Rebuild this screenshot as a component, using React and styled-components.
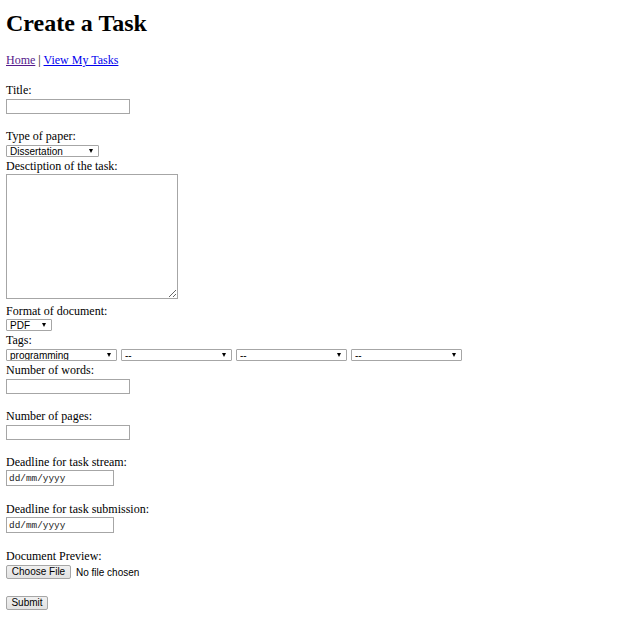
import React from "react";
import styled, { createGlobalStyle } from "styled-components";

const Global = createGlobalStyle`
  html, body { margin: 0; padding: 0; background: #fff; }
  body { font-family: "Liberation Serif", "Times New Roman", serif; color: #000; }
`;

const Page = styled.div`
  padding: 6px;
  font-size: 12px;
  line-height: 14px;
`;

const Title = styled.h1`
  margin: 3px 0 16px;
  font-size: 24px;
  line-height: 28px;
  font-weight: bold;
`;

const Nav = styled.p`
  margin: 0 0 15px;
  line-height: 14px;
`;

const NavLink = styled.a`
  color: ${(p) => (p.$visited ? "#551a8b" : "#0000ee")};
  text-decoration: underline;
`;

const Form = styled.form`
  display: flex;
  flex-direction: column;
  align-items: flex-start;
`;

const Field = styled.div`
  display: flex;
  flex-direction: column;
  align-items: flex-start;
  margin-bottom: ${(p) => p.$after || 0}px;
`;

const Label = styled.label`
  display: block;
  height: 14px;
  line-height: 16px;
`;

const Control = styled.div`
  display: flex;
  align-items: center;
  gap: ${(p) => p.$gap || 0}px;
  margin-top: ${(p) => p.$mt || 0}px;
`;

const TextInput = styled.input`
  box-sizing: border-box;
  width: 124px;
  height: 15px;
  border: 1px solid #a6a6a6;
  padding: 0 2px;
  margin: 0;
  font: 10px "Liberation Sans", Arial, sans-serif;
  background: #fff;
  outline: none;
`;

const DateInput = styled(TextInput)`
  width: 108px;
  height: 16px;
  font: 9.4px "Liberation Mono", "Courier New", monospace;
  color: #222;
  padding: 1px 2px 0;
`;

const SelectWrap = styled.span`
  position: relative;
  display: inline-flex;
  width: ${(p) => p.$w}px;
`;

const Select = styled.select`
  appearance: none;
  -webkit-appearance: none;
  box-sizing: border-box;
  width: 100%;
  height: 12px;
  margin: 0;
  padding: 1px 0 0 3px;
  border: 1px solid #a6a6a6;
  border-radius: 1px;
  background: #fff;
  color: #000;
  font: 10px/10px "Liberation Sans", Arial, sans-serif;
  outline: none;
`;

const Arrow = styled.span`
  position: absolute;
  right: 6px;
  top: 4px;
  width: 0;
  height: 0;
  border-left: 2.5px solid transparent;
  border-right: 2.5px solid transparent;
  border-top: 4px solid #000;
  pointer-events: none;
`;

const TextArea = styled.textarea`
  box-sizing: border-box;
  width: 172px;
  height: 125px;
  margin: 0;
  padding: 2px;
  border: 1px solid #a6a6a6;
  font: 10px "Liberation Mono", monospace;
  outline: none;
`;

const Button = styled.button`
  box-sizing: border-box;
  height: 14px;
  width: ${(p) => p.$w}px;
  margin: 0;
  padding: 0;
  border: 1px solid #a6a6a6;
  border-radius: 2px;
  background: linear-gradient(#f0f0f0, #e2e2e2);
  color: #000;
  font: 10px/12px "Liberation Sans", Arial, sans-serif;
`;

const FileNote = styled.span`
  font: 10px "Liberation Sans", Arial, sans-serif;
`;

function Dropdown({ w, value, options }) {
  return (
    <SelectWrap $w={w}>
      <Select defaultValue={value}>
        {options.map((o) => (
          <option key={o}>{o}</option>
        ))}
      </Select>
      <Arrow />
    </SelectWrap>
  );
}

export default function App() {
  return (
    <>
      <Global />
      <Page>
        <Title>Create a Task</Title>
        <Nav>
          <NavLink href="#" $visited>Home</NavLink> | <NavLink href="#">View My Tasks</NavLink>
        </Nav>
        <Form onSubmit={(e) => e.preventDefault()}>
          <Field $after={14}>
            <Label>Title:</Label>
            <Control $mt={3}>
              <TextInput type="text" />
            </Control>
          </Field>
          <Field $after={1}>
            <Label>Type of paper:</Label>
            <Control $mt={3}>
              <Dropdown w={93} value="Dissertation" options={["Dissertation", "Essay", "Report"]} />
            </Control>
          </Field>
          <Field $after={4}>
            <Label>Desctiption of the task:</Label>
            <Control $mt={2}>
              <TextArea />
            </Control>
          </Field>
          <Field $after={1}>
            <Label>Format of document:</Label>
            <Control $mt={2}>
              <Dropdown w={46} value="PDF" options={["PDF", "DOC"]} />
            </Control>
          </Field>
          <Field $after={1}>
            <Label>Tags:</Label>
            <Control $mt={3} $gap={4}>
              <Dropdown w={111} value="programming" options={["programming", "--"]} />
              <Dropdown w={111} value="--" options={["--", "programming"]} />
              <Dropdown w={111} value="--" options={["--", "programming"]} />
              <Dropdown w={111} value="--" options={["--", "programming"]} />
            </Control>
          </Field>
          <Field $after={14}>
            <Label>Number of words:</Label>
            <Control $mt={3}>
              <TextInput type="text" />
            </Control>
          </Field>
          <Field $after={14}>
            <Label>Number of pages:</Label>
            <Control $mt={3}>
              <TextInput type="text" />
            </Control>
          </Field>
          <Field $after={15}>
            <Label>Deadline for task stream:</Label>
            <Control $mt={2}>
              <DateInput type="text" defaultValue="dd/mm/yyyy" readOnly />
            </Control>
          </Field>
          <Field $after={15}>
            <Label>Deadline for task submission:</Label>
            <Control $mt={2}>
              <DateInput type="text" defaultValue="dd/mm/yyyy" readOnly />
            </Control>
          </Field>
          <Field $after={17}>
            <Label>Document Preview:</Label>
            <Control $mt={3} $gap={5}>
              <Button type="button" $w={65}>Choose File</Button>
              <FileNote>No file chosen</FileNote>
            </Control>
          </Field>
          <Button type="submit" $w={42}>Submit</Button>
        </Form>
      </Page>
    </>
  );
}
